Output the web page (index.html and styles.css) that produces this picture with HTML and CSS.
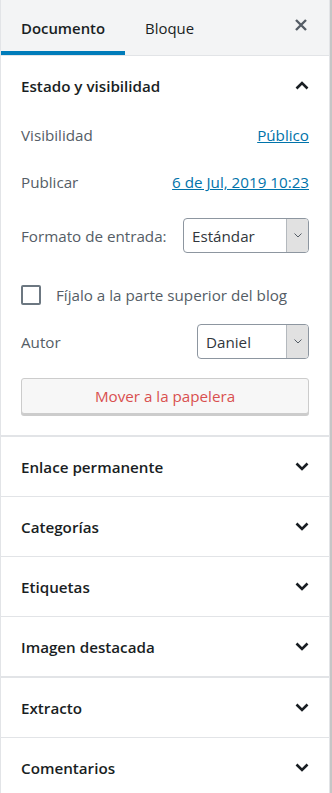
FILE: index.html
```html
<!DOCTYPE html>
<html>
<head>
    <meta charset="UTF-8">
    <title>Documento</title>
    <link rel="stylesheet" href="styles.css">
</head>
<body>
    <div class="frame">
        <div class="sidebar">
            <div class="header">
                <button class="tab active">Documento</button>
                <button class="tab">Bloque</button>
                <button class="close-btn" aria-label="Cerrar">
                    <svg viewBox="0 0 14 14" width="14" height="14">
                        <path d="M2 2L12 12M12 2L2 12" stroke="currentColor" stroke-width="2.4" fill="none"/>
                    </svg>
                </button>
            </div>

            <div class="panel open">
                <div class="panel-title">
                    <span>Estado y visibilidad</span>
                    <svg class="chevron" viewBox="0 0 14 9"><path d="M1.5 7.5L7 2L12.5 7.5" /></svg>
                </div>
                <div class="panel-body">
                    <div class="row row-visibility">
                        <span class="label">Visibilidad</span>
                        <a class="link" href="#">Público</a>
                    </div>
                    <div class="row row-publish">
                        <span class="label">Publicar</span>
                        <a class="link" href="#">6 de Jul, 2019 10:23</a>
                    </div>
                    <div class="row row-format">
                        <span class="label">Formato de entrada:</span>
                        <div class="select select-format">
                            <span class="select-value">Estándar</span>
                            <span class="select-arrow"><svg viewBox="0 0 8 5"><path d="M0.5 0.5L4 4L7.5 0.5" /></svg></span>
                        </div>
                    </div>
                    <label class="row row-sticky">
                        <span class="checkbox"></span>
                        <span class="label">Fíjalo a la parte superior del blog</span>
                    </label>
                    <div class="row row-author">
                        <span class="label">Autor</span>
                        <div class="select select-author">
                            <span class="select-value">Daniel</span>
                            <span class="select-arrow"><svg viewBox="0 0 8 5"><path d="M0.5 0.5L4 4L7.5 0.5" /></svg></span>
                        </div>
                    </div>
                    <button class="trash-btn">Mover a la papelera</button>
                </div>
            </div>

            <div class="panel thick">
                <div class="panel-title">
                    <span>Enlace permanente</span>
                    <svg class="chevron" viewBox="0 0 14 9"><path d="M1.5 1.5L7 7L12.5 1.5" /></svg>
                </div>
            </div>
            <div class="panel">
                <div class="panel-title">
                    <span>Categorías</span>
                    <svg class="chevron" viewBox="0 0 14 9"><path d="M1.5 1.5L7 7L12.5 1.5" /></svg>
                </div>
            </div>
            <div class="panel">
                <div class="panel-title">
                    <span>Etiquetas</span>
                    <svg class="chevron" viewBox="0 0 14 9"><path d="M1.5 1.5L7 7L12.5 1.5" /></svg>
                </div>
            </div>
            <div class="panel">
                <div class="panel-title">
                    <span>Imagen destacada</span>
                    <svg class="chevron" viewBox="0 0 14 9"><path d="M1.5 1.5L7 7L12.5 1.5" /></svg>
                </div>
            </div>
            <div class="panel thick">
                <div class="panel-title">
                    <span>Extracto</span>
                    <svg class="chevron" viewBox="0 0 14 9"><path d="M1.5 1.5L7 7L12.5 1.5" /></svg>
                </div>
            </div>
            <div class="panel">
                <div class="panel-title">
                    <span>Comentarios</span>
                    <svg class="chevron" viewBox="0 0 14 9"><path d="M1.5 1.5L7 7L12.5 1.5" /></svg>
                </div>
            </div>
        </div>
        <div class="scroll-track"></div>
    </div>
</body>
</html>
```

FILE: styles.css
```css
:root {
    --text: #191e23;
    --text-secondary: #555d66;
    --border: #e2e4e7;
    --header-bg: #f3f4f5;
    --primary: #007cba;
    --link: #0073aa;
    --danger: #d94f4f;
}

body {
    margin: 0;
    padding: 0;
    width: 332px;
    height: 793px;
    overflow: hidden;
    background: #ffffff;
    font-family: 'Open Sans', 'Noto Sans', sans-serif;
    font-size: 15.2px;
    color: var(--text);
}

.frame {
    display: flex;
    height: 100%;
}

.sidebar {
    flex: 1;
    border-left: 1px solid var(--border);
    border-right: 1px solid var(--border);
    overflow: hidden;
}

.scroll-track {
    width: 2px;
    background: #c6c6c6;
}

button {
    font-family: inherit;
    border: none;
    background: none;
    cursor: pointer;
    padding: 0;
}

.header {
    display: flex;
    align-items: stretch;
    height: 55px;
    background: var(--header-bg);
    border-bottom: 1px solid var(--border);
}

.tab {
    padding: 0 20px;
    font-size: 14.9px;
    color: var(--text);
}

.tab.active {
    font-weight: 600;
    box-shadow: inset 0 -4px 0 var(--primary);
}

.close-btn {
    margin-left: auto;
    width: 40px;
    margin-right: 8px;
    display: flex;
    align-items: center;
    justify-content: center;
    color: #555d66;
    padding-bottom: 6px;
}

.panel {
    border-bottom: 1px solid var(--border);
}

.panel.thick {
    border-top: 1px solid var(--border);
}

.panel-title {
    display: flex;
    justify-content: space-between;
    align-items: center;
    height: 59px;
    padding: 0 20px;
    font-size: 15.2px;
    font-weight: 600;
    color: var(--text);
}

.chevron {
    width: 14px;
    height: 9px;
    fill: none;
    stroke: var(--text);
    stroke-width: 2.6;
}

.panel-body {
    padding: 2px 20px 21px;
}

.row {
    display: flex;
    justify-content: space-between;
    align-items: center;
    height: 36px;
}

.label {
    color: var(--text-secondary);
}

.link {
    color: var(--link);
    text-decoration: underline;
}

.row-publish {
    margin-top: 11px;
}

.row-format {
    margin-top: 18px;
    height: 35px;
}

.row-sticky {
    margin-top: 24px;
    justify-content: flex-start;
    gap: 15px;
}

.row-author {
    margin-top: 11px;
    height: 35px;
}

.checkbox {
    width: 16px;
    height: 16px;
    border: 2px solid #6c7781;
    border-radius: 2px;
}

.select {
    display: flex;
    height: 35px;
    box-sizing: border-box;
    border: 1px solid #8d96a0;
    border-radius: 4px;
    overflow: hidden;
    color: #32373c;
}

.select-format {
    width: 126px;
}

.select-author {
    width: 112px;
}

.select-value {
    flex: 1;
    display: flex;
    align-items: center;
    padding-left: 8px;
}

.select-arrow {
    width: 21px;
    display: flex;
    align-items: center;
    justify-content: center;
    background: #e1e1e1;
    border-left: 1px solid #b4b9be;
}

.select-arrow svg {
    width: 8px;
    height: 5px;
    fill: none;
    stroke: #555d66;
    stroke-width: 1;
}

.trash-btn {
    display: block;
    width: 100%;
    height: 36px;
    margin-top: 19px;
    box-sizing: border-box;
    border: 1px solid #ccc;
    border-radius: 3px;
    background: #f7f7f7;
    box-shadow: 0 2px 0 #ccc;
    color: var(--danger);
    font-size: 15.2px;
}
```
